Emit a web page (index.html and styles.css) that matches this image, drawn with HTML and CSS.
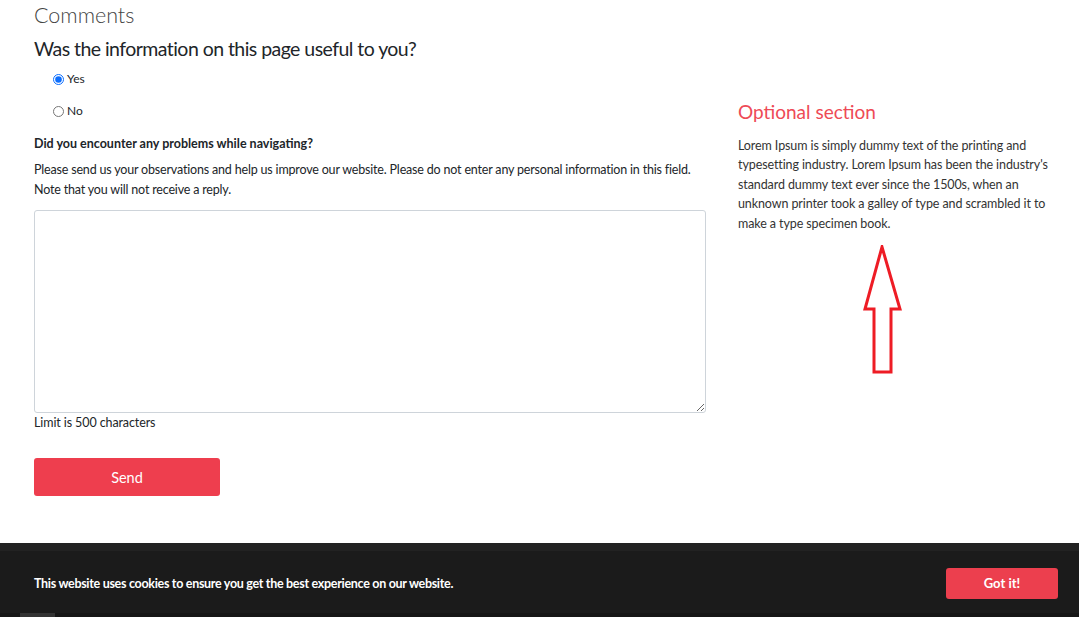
FILE: index.html
```html
<!DOCTYPE html>
<html lang="en">
<head>
<meta charset="utf-8">
<title>Comments</title>
<link rel="stylesheet" href="styles.css">
</head>
<body>
<main class="page">
  <section class="main-col">
    <h2 class="title">Comments</h2>
    <h3 class="question">Was the information on this page useful to you?</h3>
    <div class="radios">
      <label class="radio"><input type="radio" name="useful" checked> Yes</label>
      <label class="radio"><input type="radio" name="useful"> No</label>
    </div>
    <p class="label-bold">Did you encounter any problems while navigating?</p>
    <p class="help">Please send us your observations and help us improve our website. Please do not enter any personal information in this field. Note that you will not receive a reply.</p>
    <textarea class="comment-box"></textarea>
    <p class="limit">Limit is 500 characters</p>
    <button class="btn-send" type="button">Send</button>
  </section>
  <aside class="side-col">
    <h3 class="side-title">Optional section</h3>
    <p class="side-text">Lorem Ipsum is simply dummy text of the printing and typesetting industry. Lorem Ipsum has been the industry's standard dummy text ever since the 1500s, when an unknown printer took a galley of type and scrambled it to make a type specimen book.</p>
    <svg class="arrow" width="40" height="130" viewBox="0 0 40 130" aria-hidden="true">
      <polygon points="19,2 37,64 28,64 28,127 11,127 11,64 2,64" fill="none" stroke="#ee1c25" stroke-width="3"/>
    </svg>
  </aside>
</main>
<footer class="footer">
  <div class="cookie-bar">
    <span class="cookie-text">This website uses cookies to ensure you get the best experience on our website.</span>
    <button class="btn-cookie" type="button">Got it!</button>
  </div>
  <div class="footer-strip"><span class="strip-block"></span></div>
</footer>
</body>
</html>
```

FILE: styles.css
```css
* { box-sizing: border-box; }
html, body { margin: 0; padding: 0; background: #fff; }
body {
  font-family: "Lato", "Open Sans", sans-serif;
  color: #212529;
  font-size: 13px;
}
.page {
  display: grid;
  grid-template-columns: 672px 341px;
  column-gap: 32px;
  padding: 0 0 0 34px;
  height: 543px;
}
.main-col { display: flex; flex-direction: column; align-items: flex-start; }
.title {
  margin: 2px 0 0;
  font-size: 21.5px;
  font-weight: 300;
  color: #444;
  line-height: 26px;
}
.question {
  margin: 8px 0 0;
  font-size: 19.5px;
  letter-spacing: -0.55px;
  font-weight: 400;
  line-height: 26px;
  color: #212529;
}
.radios { display: flex; flex-direction: column; gap: 12px; margin: 7px 0 0 19px; }
.radio { display: flex; align-items: center; gap: 3px; font-size: 12px; line-height: 20px; }
.radio input { margin: 0; width: 11px; height: 11px; accent-color: #0d6efd; }
.label-bold { margin: 13px 0 0; font-weight: 700; font-size: 12.5px; line-height: 20px; }
.help { margin: 6px 0 0; font-size: 12.5px; line-height: 19.5px; letter-spacing: -0.18px; }
.comment-box {
  margin-top: 11px;
  width: 672px;
  height: 203px;
  border: 1px solid #ced4da;
  border-radius: 3px;
  resize: vertical;
  font-family: inherit;
}
.limit { margin: 0; font-size: 12.5px; line-height: 20px; letter-spacing: -0.1px; }
.btn-send {
  margin-top: 25px;
  width: 186px;
  height: 38px;
  border: none;
  border-radius: 3px;
  background: #ee3e4e;
  color: #fff;
  font-family: inherit;
  font-size: 14.5px;
}
.side-col { padding-top: 100px; display: flex; flex-direction: column; }
.side-title {
  margin: 0;
  font-size: 19px;
  font-weight: 400;
  color: #ee4a56;
  line-height: 24px;
}
.side-text {
  margin: 12px 0 0;
  font-size: 12.5px;
  line-height: 19.4px;
  letter-spacing: -0.1px;
  color: #333;
  width: 320px;
}
.arrow { margin: 12px 0 0 125px; display: block; }
.footer { background: #222; padding-top: 8px; }
.cookie-bar {
  background: #1b1b1b;
  height: 62px;
  display: flex;
  align-items: center;
  justify-content: space-between;
  padding: 2px 21px 0 34px;
}
.cookie-text { color: #fff; font-weight: 700; font-size: 12.5px; letter-spacing: -0.3px; }
.btn-cookie {
  width: 112px;
  height: 31px;
  border: none;
  border-radius: 3px;
  background: #ec3f4e;
  color: #fff;
  font-family: inherit;
  font-size: 13px;
  font-weight: 700;
}
.footer-strip { background: #161616; height: 20px; padding-left: 20px; }
.strip-block { display: block; width: 35px; height: 20px; background: #333; }
```
